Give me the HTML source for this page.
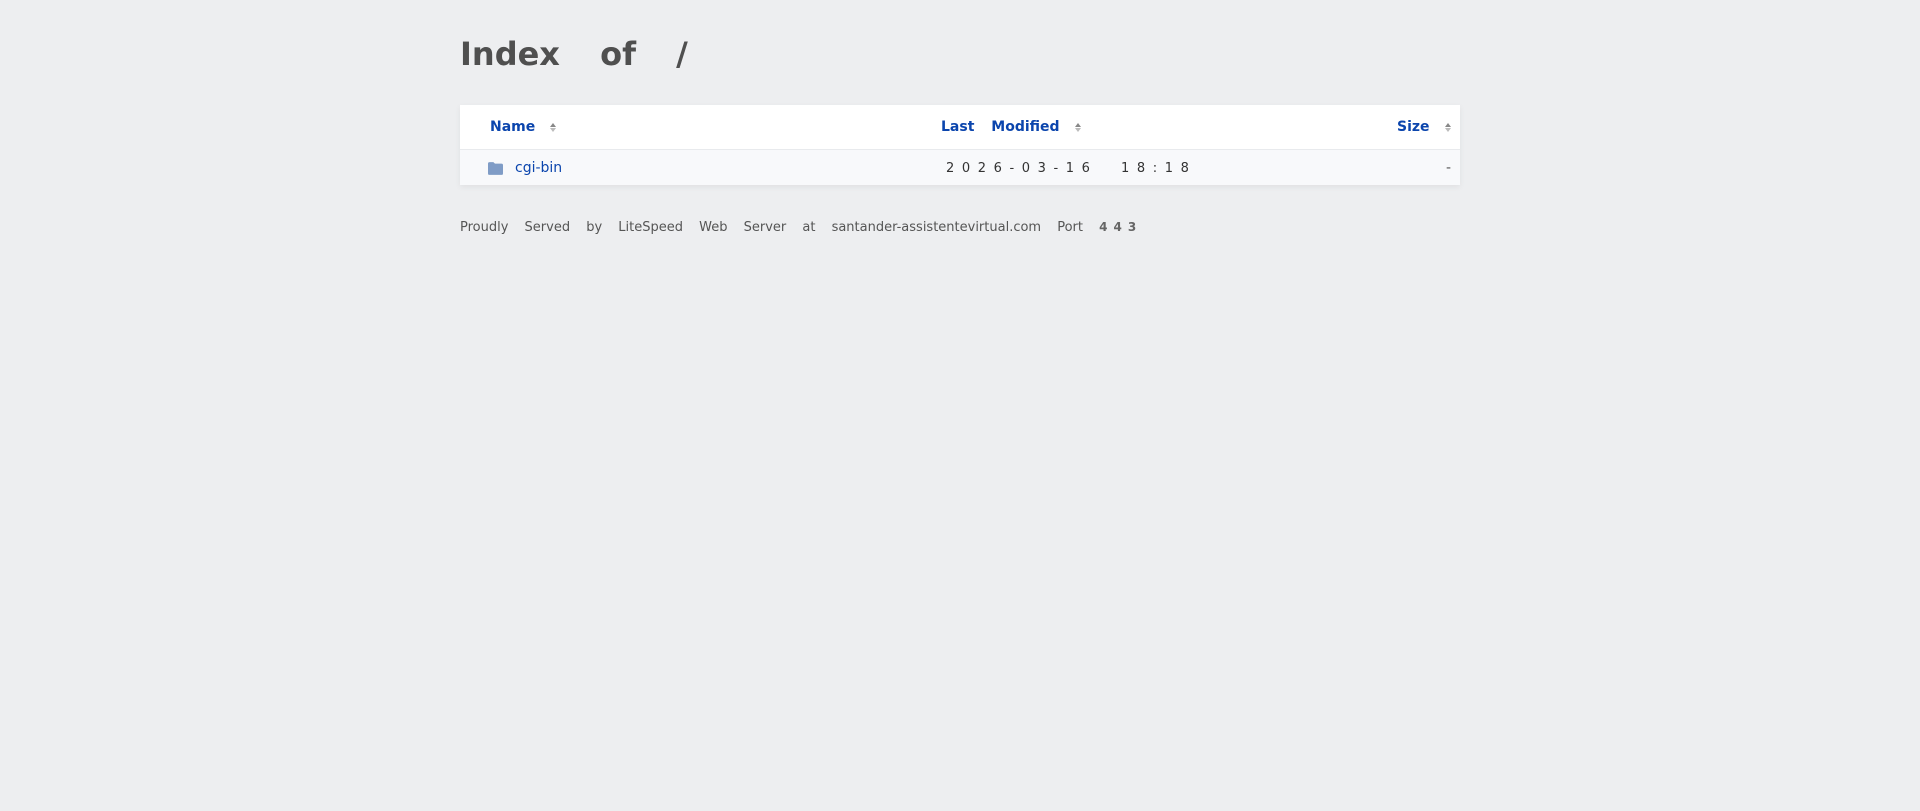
<!DOCTYPE html>
<html><head><meta charset="utf-8"><style>
body{margin:0;background:#edeef0;font-family:"DejaVu Sans","Liberation Sans",sans-serif;width:1920px;height:811px;overflow:hidden}
h1{position:absolute;left:460px;top:35px;margin:0;font-size:32px;font-weight:bold;color:#4f4f4f;word-spacing:29px}
.tbl{position:absolute;left:460px;top:105px;width:1000px;background:#fff;box-shadow:0 2px 6px rgba(0,0,0,.06)}
.hd{height:44px;border-bottom:1px solid #e8eaed;position:relative}
.row{height:35px;background:#f8f9fb;position:relative}
.t{position:absolute;font-size:14px;font-weight:bold;color:#0b45ad;top:14px;word-spacing:12px}
.s{position:absolute;top:18px;width:0;height:0}
.s:before{content:"";position:absolute;left:-3px;top:0;border:3px solid transparent;border-bottom:4px solid #888;border-top:0}
.s:after{content:"";position:absolute;left:-3px;top:5px;border:3px solid transparent;border-top:4px solid #bbb;border-bottom:0}
.r{position:absolute;top:10px;font-size:14px}
.f{position:absolute;left:460px;top:220px;font-size:13px;color:#555;word-spacing:12px}
</style></head><body>
<h1>Index of /</h1>
<div class="tbl">
<div class="hd">
<span class="t" style="left:30px">Name</span><span class="s" style="left:93px"></span>
<span class="t" style="left:481px">Last Modified</span><span class="s" style="left:618px"></span>
<span class="t" style="left:937px">Size</span><span class="s" style="left:988px"></span>
</div>
<div class="row">
<svg style="position:absolute;left:28px;top:12px" width="15" height="13" viewBox="0 0 14 12"><path d="M0 1.5Q0 0 1.5 0H5L6.5 1.5H12.5Q14 1.5 14 3V10.5Q14 12 12.5 12H1.5Q0 12 0 10.5Z" fill="#7f9cc6"/></svg>
<span class="r" style="left:55px;color:#0b45ad">cgi-bin</span>
<span class="r" style="left:486px;color:#333;font-size:13px;letter-spacing:7.6px;top:11px">2026-03-16&nbsp; 18:18</span>
<span class="r" style="left:986px;color:#555">-</span>
</div>
</div>
<div class="f">Proudly Served by LiteSpeed Web Server at santander-assistentevirtual.com Port <b style="letter-spacing:6px;font-size:12px;color:#666">443</b></div>
</body></html>
